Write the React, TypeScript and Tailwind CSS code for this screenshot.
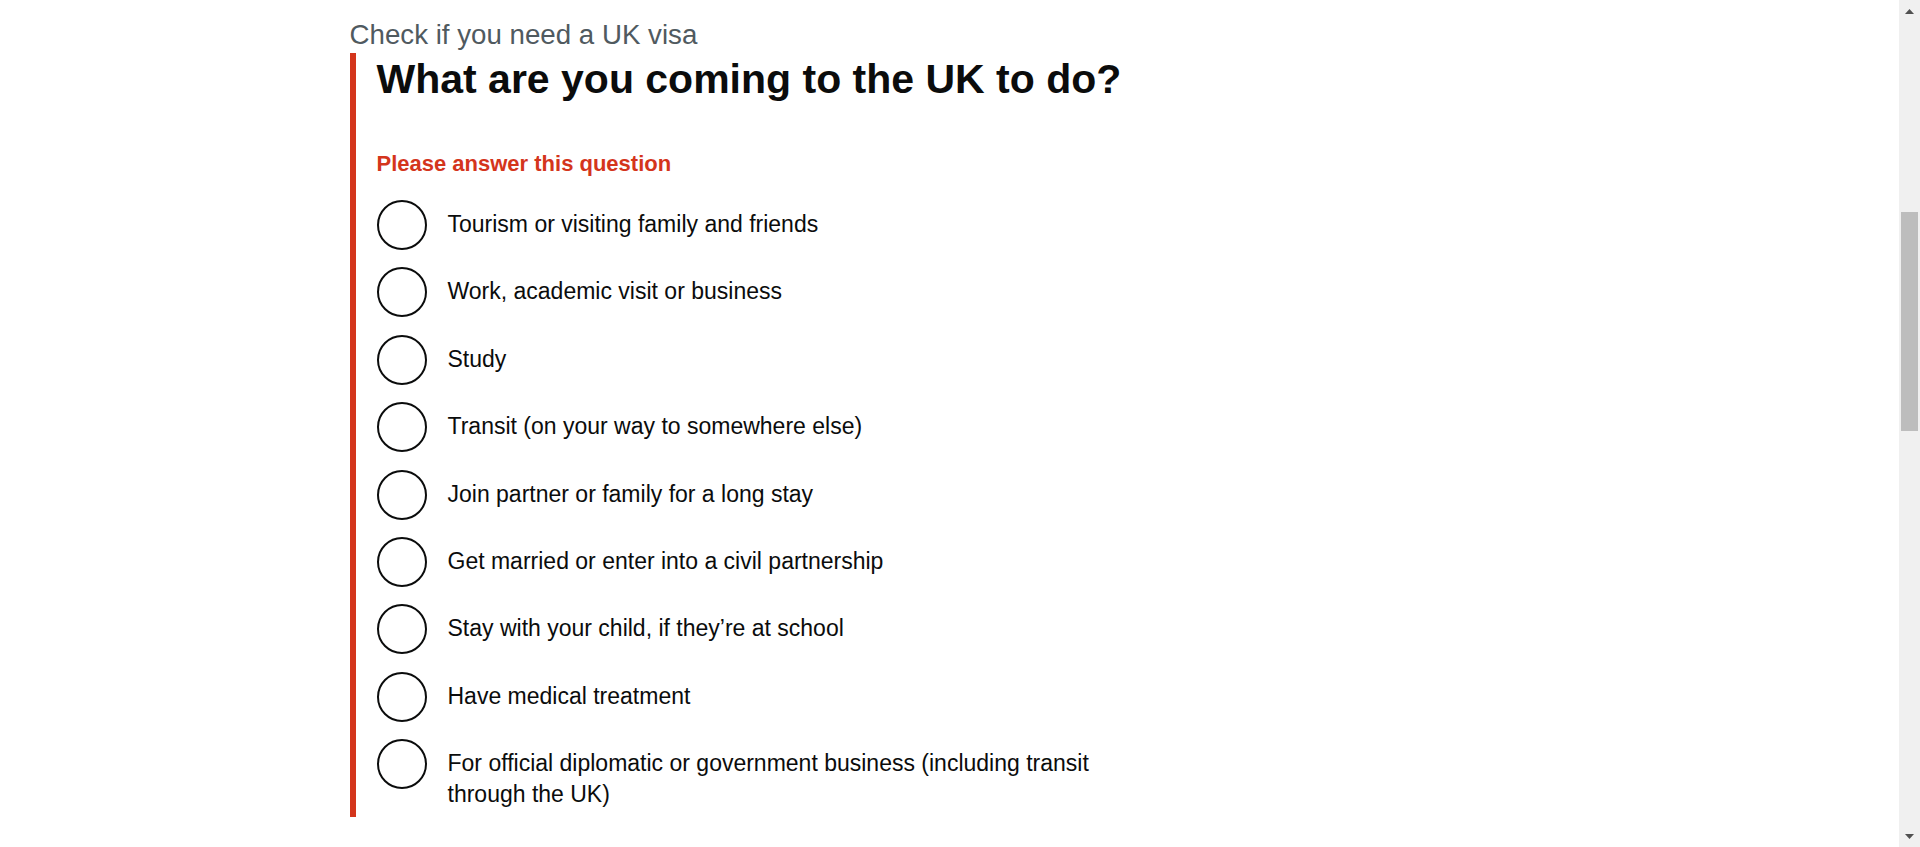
import React from 'react';

const options = [
  'Tourism or visiting family and friends',
  'Work, academic visit or business',
  'Study',
  'Transit (on your way to somewhere else)',
  'Join partner or family for a long stay',
  'Get married or enter into a civil partnership',
  'Stay with your child, if they’re at school',
  'Have medical treatment',
  'For official diplomatic or government business (including transit through the UK)',
];

function FakeScrollbar() {
  return (
    <div className="sticky top-0 flex h-screen w-[21px] shrink-0 flex-col items-center bg-[#f0f0f0]">
      <svg className="mt-[9px]" width="9" height="5" viewBox="0 0 9 5">
        <path d="M4.5 0 L9 5 L0 5 Z" fill="#505050" />
      </svg>
      <div className="mt-[198px] h-[219px] w-[17px] bg-[#bdbdbd]" />
      <div className="flex-1" />
      <svg className="mb-[8px]" width="9" height="5" viewBox="0 0 9 5">
        <path d="M0 0 L9 0 L4.5 5 Z" fill="#505050" />
      </svg>
    </div>
  );
}

export default function App() {
  return (
    <div className="flex min-h-screen bg-white font-['Liberation_Sans',Arial,sans-serif] text-[#0b0c0c]">
      <main className="flex-1">
        <div className="mx-auto w-[1200px]">
          <div className="w-[788px]">
            <span className="block pt-[19px] text-[27.7px] leading-[32px] text-[#505a5f]">
              Check if you need a UK visa
            </span>
            <div className="mt-[2px] border-l-[6px] border-[#d4351c] pl-[21px] pt-[2px]">
              <h1 className="text-[41px] font-bold leading-[48px]">What are you coming to the UK to do?</h1>
              <p className="mt-[46px] text-[22px] font-bold leading-[30px] text-[#d4351c]">
                Please answer this question
              </p>
              <div className="mt-[21px] flex flex-col gap-[17.4px]">
                {options.map((opt) => (
                  <label key={opt} className="flex min-h-[50px] items-start">
                    <span className="h-[50px] w-[50px] shrink-0 rounded-full border-2 border-[#0b0c0c] bg-white" />
                    <span className="pl-[21px] pt-[9px] pb-[7px] text-[23px] leading-[31px]">{opt}</span>
                  </label>
                ))}
              </div>
            </div>
          </div>
        </div>
      </main>
      <FakeScrollbar />
    </div>
  );
}
